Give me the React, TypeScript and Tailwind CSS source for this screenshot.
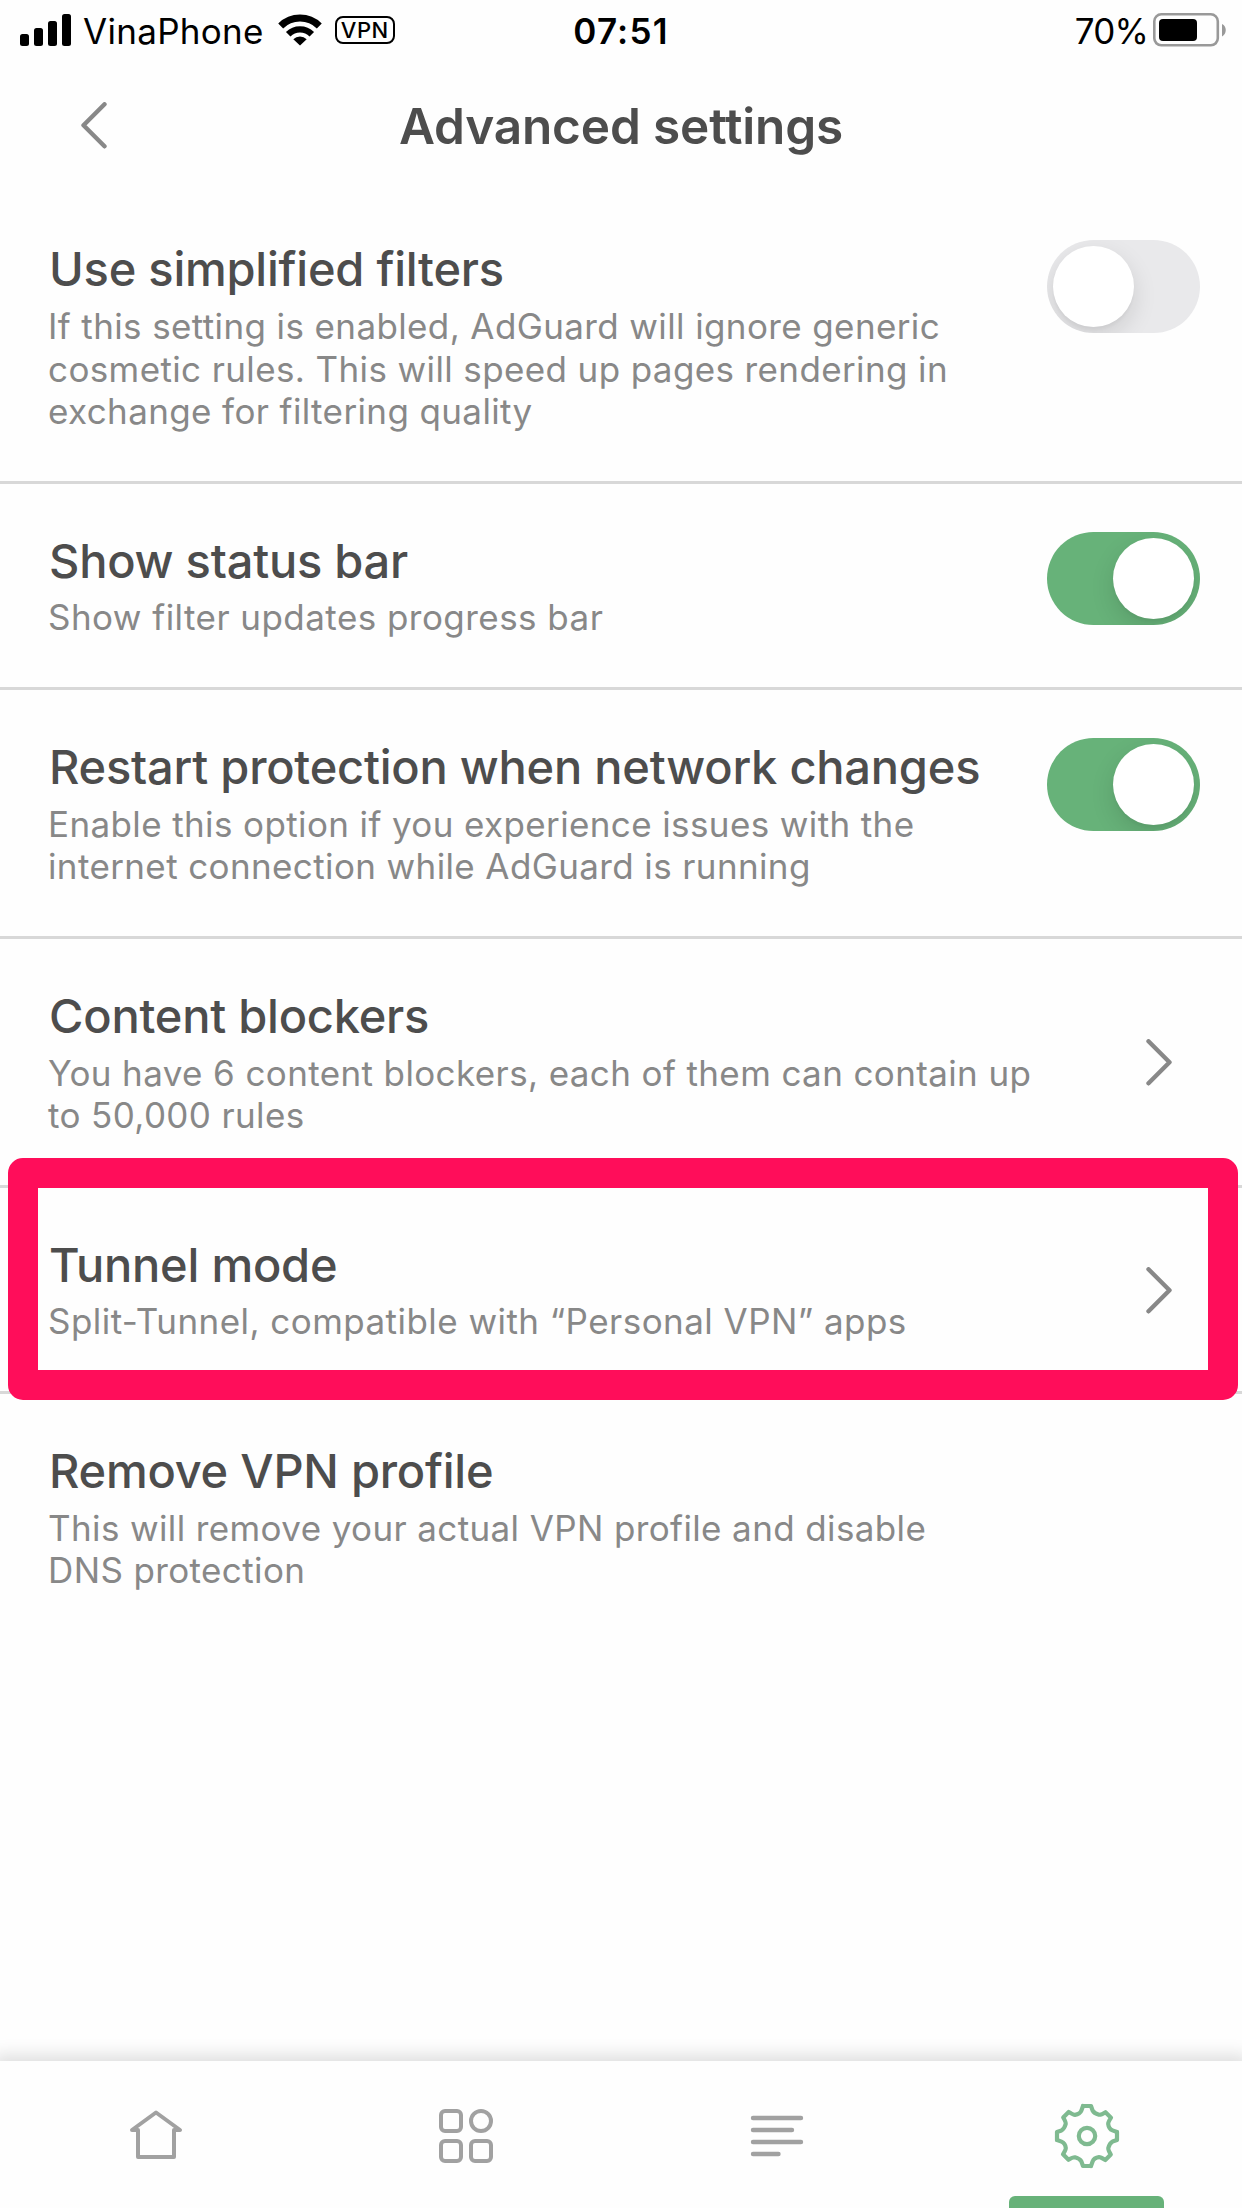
import type { ReactNode } from "react";

function StatusBar() {
  return (
    <div className="grid h-[60px] grid-cols-[1fr_auto_1fr] items-start text-[35px] leading-[62px] text-black">
      <div className="flex items-start pl-5">
        <svg width="52" height="33" viewBox="0 0 52 33" className="mt-3.5 shrink-0">
          <rect x="0" y="20" width="9" height="12" rx="2.5" />
          <rect x="14" y="14" width="9" height="18" rx="2.5" />
          <rect x="28" y="7" width="9" height="25" rx="2.5" />
          <rect x="42" y="0" width="9" height="32" rx="2.5" />
        </svg>
        <span className="ml-[11px] tracking-[0.3px]">VinaPhone</span>
        <svg width="44" height="34" viewBox="0 0 44 34" className="mt-3 ml-3.5 shrink-0">
          <path d="M2.7 14 A27.5 27.5 0 0 1 41.3 14" fill="none" stroke="black" strokeWidth="7" />
          <path d="M10.2 22.2 A16.8 16.8 0 0 1 33.8 22.2" fill="none" stroke="black" strokeWidth="6.4" />
          <path d="M22 33.6 L15.3 27.2 A9.6 9.6 0 0 1 28.7 27.2 Z" />
        </svg>
        <span className="mt-4 ml-[13px] flex h-7 w-[60px] items-center justify-center rounded-lg border-[2.5px] border-black text-[22px] leading-none font-medium tracking-[0.5px]">
          VPN
        </span>
      </div>
      <span className="font-semibold tracking-[1.2px]">07:51</span>
      <div className="flex items-start justify-end pr-[15px]">
        <span className="mr-[5px] tracking-[-0.8px]">70%</span>
        <svg width="74" height="34" viewBox="0 0 74 34" className="mt-[13px] shrink-0">
          <rect x="1.3" y="1.3" width="63.5" height="31" rx="7" fill="none" stroke="#999999" strokeWidth="2.6" />
          <rect x="6" y="6" width="38" height="22" rx="4" />
          <path d="M69 11 C74 13 74 21 69 23.5 Z" fill="#999999" />
        </svg>
      </div>
    </div>
  );
}

function Header() {
  return (
    <header className="grid h-[132px] grid-cols-[140px_1fr_140px] items-start">
      <svg width="26" height="47" viewBox="0 0 26 47" className="mt-[42px] ml-[81px]">
        <path d="M23.5 2.3 L2.5 23.3 L23.5 44.3" fill="none" stroke="#888888" strokeWidth="4.4" strokeLinecap="round" strokeLinejoin="round" />
      </svg>
      <h1 className="mt-9 text-center text-[49.5px] leading-[60px] font-semibold tracking-[-0.15px] text-[#4d4d4d]">Advanced settings</h1>
    </header>
  );
}

function Toggle({ on }: { on?: boolean }) {
  return (
    <span
      className={
        on
          ? "mt-12 mr-[42px] flex h-[93px] w-[153px] shrink-0 justify-end overflow-hidden rounded-full bg-[#67b279] p-1.5"
          : "mt-12 mr-[42px] flex h-[93px] w-[153px] shrink-0 justify-start overflow-hidden rounded-full bg-[#e9e9eb] p-1.5"
      }
    >
      <span className="size-[81px] rounded-full bg-white shadow-[0_9px_24px_rgba(0,0,0,0.12),0_3px_3px_rgba(0,0,0,0.03)]" />
    </span>
  );
}

function Chevron() {
  return (
    <svg width="26" height="47" viewBox="0 0 26 47" className="mt-0.5 mr-[70px] shrink-0 self-center">
      <path d="M2.5 2.3 L23.5 23.3 L2.5 44.3" fill="none" stroke="#888888" strokeWidth="4.4" strokeLinecap="round" strokeLinejoin="round" />
    </svg>
  );
}

function Row({ title, lines, last, children }: { title: string; lines: string[]; last?: boolean; children?: ReactNode }) {
  return (
    <div className={last ? "flex justify-between" : "flex justify-between border-b-[3px] border-[#d8d8d8]"}>
      <div className="pt-12 pb-12 pl-12 whitespace-nowrap">
        <h2 className="ml-px text-[47px] leading-[57px] font-medium tracking-[-0.23px] text-[#4d4d4d]">{title}</h2>
        <p
          className={
            lines.length > 1
              ? "mt-2 text-[35px] leading-[42.5px] tracking-[0.38px] text-[#888888]"
              : "mt-[7px] text-[35px] leading-[43px] tracking-[0.45px] text-[#888888]"
          }
        >
          {lines.map((line) => (
            <span key={line} className="block">{line}</span>
          ))}
        </p>
      </div>
      {children}
    </div>
  );
}

const GEAR_QUARTER =
  "M-4 -30 H4 L5.6 -25.5 Q7 -22.7 12 -21.3 Q14 -21 18.5 -23.8 L24 -18.3 Q21 -13.5 21.2 -12 Q21.8 -7 25.5 -5.6 L30 -4";

function TabBar() {
  return (
    <nav className="grid h-[147px] grid-cols-4 bg-[#fefefe] shadow-[0_0_16px_6px_rgba(0,0,0,0.13)]">
      <div className="flex justify-center pt-10">
        <svg width="70" height="70" viewBox="-35 -35 70 70" fill="none" stroke="#a1a1a1" strokeWidth="4" strokeLinejoin="round" strokeLinecap="round">
          <path d="M-17 -6 H-23 L1 -23.5 L25 -6 H19 V21 H-17 Z" />
        </svg>
      </div>
      <div className="flex justify-center pt-10">
        <svg width="70" height="70" viewBox="-35 -35 70 70" fill="none" stroke="#a1a1a1" strokeWidth="4">
          <rect x="-25" y="-25" width="20" height="20" rx="4" />
          <circle cx="15" cy="-15" r="10" />
          <rect x="-25" y="5" width="20" height="20" rx="4" />
          <rect x="5" y="5" width="20" height="20" rx="4" />
        </svg>
      </div>
      <div className="flex justify-center pt-10">
        <svg width="70" height="70" viewBox="-35 -35 70 70" fill="none" stroke="#a1a1a1" strokeWidth="4.4" strokeLinecap="round">
          <path d="M-23 -18 H25 M-23 -6 H16 M-23 6 H25 M-23 18 H2.5" />
        </svg>
      </div>
      <div className="flex flex-col items-center justify-between pt-10">
        <svg width="70" height="70" viewBox="-35 -35 70 70" fill="none" stroke="#7fba90" strokeWidth="4.2" strokeLinejoin="round" strokeLinecap="round">
          {[0, 90, 180, 270].map((angle) => (
            <path key={angle} d={GEAR_QUARTER} transform={`rotate(${angle})`} />
          ))}
          <circle r="8.2" />
        </svg>
        <span className="h-3 w-[155px] rounded-t-md bg-[#67b279]" />
      </div>
    </nav>
  );
}

export default function App() {
  return (
    <div className="flex h-[2208px] w-[1242px] flex-col overflow-hidden bg-[#fefefe] font-['Inter',sans-serif]">
      <StatusBar />
      <Header />
      <main className="flex-1">
        <Row
          title="Use simplified filters"
          lines={[
            "If this setting is enabled, AdGuard will ignore generic",
            "cosmetic rules. This will speed up pages rendering in",
            "exchange for filtering quality",
          ]}
        >
          <Toggle />
        </Row>
        <Row title="Show status bar" lines={["Show filter updates progress bar"]}>
          <Toggle on />
        </Row>
        <Row
          title="Restart protection when network changes"
          lines={["Enable this option if you experience issues with the", "internet connection while AdGuard is running"]}
        >
          <Toggle on />
        </Row>
        <Row
          title="Content blockers"
          lines={["You have 6 content blockers, each of them can contain up", "to 50,000 rules"]}
        >
          <Chevron />
        </Row>
        <div className="relative">
          <Row title="Tunnel mode" lines={["Split-Tunnel, compatible with “Personal VPN” apps"]}>
            <Chevron />
          </Row>
          <div className="pointer-events-none absolute -top-[30px] right-1 -bottom-1.5 left-2 rounded-[15px] border-[30px] border-[#ff0d5a]" />
        </div>
        <Row
          last
          title="Remove VPN profile"
          lines={["This will remove your actual VPN profile and disable", "DNS protection"]}
        />
      </main>
      <TabBar />
    </div>
  );
}
